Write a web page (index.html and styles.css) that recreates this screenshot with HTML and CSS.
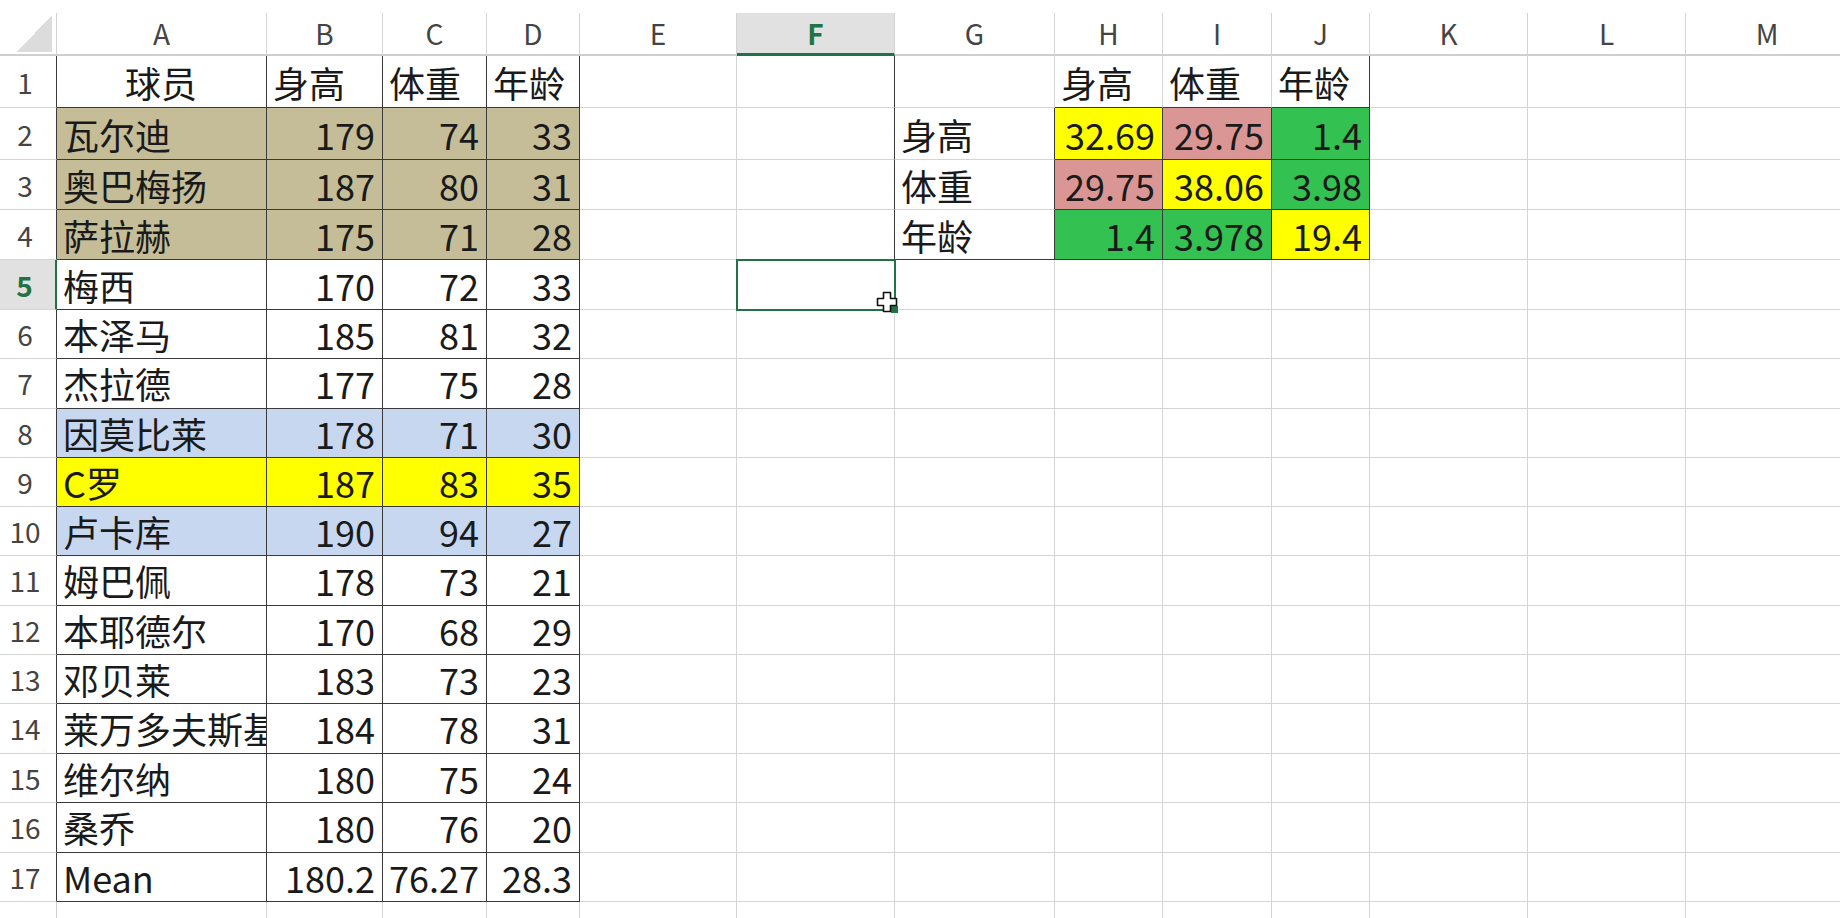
FILE: index.html
```html
<!doctype html>
<html>
  <head>
    <title>球员数据</title>
    <link rel="stylesheet" href="styles.css">
  </head>
  <body>
    <div class="sheet">
      <div class="corner"></div>
      <div class="ch">A</div>
      <div class="ch">B</div>
      <div class="ch">C</div>
      <div class="ch">D</div>
      <div class="ch">E</div>
      <div class="ch sel">F</div>
      <div class="ch">G</div>
      <div class="ch">H</div>
      <div class="ch">I</div>
      <div class="ch">J</div>
      <div class="ch">K</div>
      <div class="ch">L</div>
      <div class="ch">M</div>

      <!-- 1 -->
      <div class="rh e">1</div>
      <div class="c t m">球员</div>
      <div class="c t">身高</div>
      <div class="c t">体重</div>
      <div class="c t">年龄</div>
      <div class="c"></div>
      <div class="c er"></div>
      <div class="c"></div>
      <div class="c eb">身高</div>
      <div class="c eb">体重</div>
      <div class="c eb er">年龄</div>
      <div class="c"></div><div class="c"></div><div class="c"></div>

      <!-- 2 -->
      <div class="rh e">2</div>
      <div class="c t k">瓦尔迪</div>
      <div class="c t k n">179</div>
      <div class="c t k n">74</div>
      <div class="c t k n">33</div>
      <div class="c"></div>
      <div class="c er"></div>
      <div class="c er">身高</div>
      <div class="c t y n">32.69</div>
      <div class="c t p n">29.75</div>
      <div class="c t g n">1.4</div>
      <div class="c"></div><div class="c"></div><div class="c"></div>

      <!-- 3 -->
      <div class="rh e">3</div>
      <div class="c t k">奥巴梅扬</div>
      <div class="c t k n">187</div>
      <div class="c t k n">80</div>
      <div class="c t k n">31</div>
      <div class="c"></div>
      <div class="c er"></div>
      <div class="c er">体重</div>
      <div class="c t p n">29.75</div>
      <div class="c t y n">38.06</div>
      <div class="c t g n">3.98</div>
      <div class="c"></div><div class="c"></div><div class="c"></div>

      <!-- 4 -->
      <div class="rh e">4</div>
      <div class="c t k">萨拉赫</div>
      <div class="c t k n">175</div>
      <div class="c t k n">71</div>
      <div class="c t k n">28</div>
      <div class="c"></div>
      <div class="c er"></div>
      <div class="c er eb">年龄</div>
      <div class="c t g n">1.4</div>
      <div class="c t g n">3.978</div>
      <div class="c t y n">19.4</div>
      <div class="c"></div><div class="c"></div><div class="c"></div>

      <!-- 5 -->
      <div class="rh sel">5</div>
      <div class="c t">梅西</div>
      <div class="c t n">170</div>
      <div class="c t n">72</div>
      <div class="c t n">33</div>
      <div class="c"></div>
      <div class="c cur">
        <svg class="pointer" width="22" height="22" viewBox="0 0 22 22">
          <path d="M7.5 1.5h7v6h6v7h-6v6h-7v-6h-6v-7h6z" fill="#fff" stroke="#111" stroke-width="1.6" stroke-linejoin="round"/>
        </svg>
      </div>
      <div class="c"></div><div class="c"></div><div class="c"></div><div class="c"></div>
      <div class="c"></div><div class="c"></div><div class="c"></div>

      <!-- 6 -->
      <div class="rh e">6</div>
      <div class="c t">本泽马</div>
      <div class="c t n">185</div>
      <div class="c t n">81</div>
      <div class="c t n">32</div>
      <div class="c"></div><div class="c"></div><div class="c"></div><div class="c"></div>
      <div class="c"></div><div class="c"></div><div class="c"></div><div class="c"></div><div class="c"></div>

      <!-- 7 -->
      <div class="rh e">7</div>
      <div class="c t">杰拉德</div>
      <div class="c t n">177</div>
      <div class="c t n">75</div>
      <div class="c t n">28</div>
      <div class="c"></div><div class="c"></div><div class="c"></div><div class="c"></div>
      <div class="c"></div><div class="c"></div><div class="c"></div><div class="c"></div><div class="c"></div>

      <!-- 8 -->
      <div class="rh e">8</div>
      <div class="c t bl">因莫比莱</div>
      <div class="c t bl n">178</div>
      <div class="c t bl n">71</div>
      <div class="c t bl n">30</div>
      <div class="c"></div><div class="c"></div><div class="c"></div><div class="c"></div>
      <div class="c"></div><div class="c"></div><div class="c"></div><div class="c"></div><div class="c"></div>

      <!-- 9 -->
      <div class="rh e">9</div>
      <div class="c t y">C罗</div>
      <div class="c t y n">187</div>
      <div class="c t y n">83</div>
      <div class="c t y n">35</div>
      <div class="c"></div><div class="c"></div><div class="c"></div><div class="c"></div>
      <div class="c"></div><div class="c"></div><div class="c"></div><div class="c"></div><div class="c"></div>

      <!-- 10 -->
      <div class="rh e">10</div>
      <div class="c t bl">卢卡库</div>
      <div class="c t bl n">190</div>
      <div class="c t bl n">94</div>
      <div class="c t bl n">27</div>
      <div class="c"></div><div class="c"></div><div class="c"></div><div class="c"></div>
      <div class="c"></div><div class="c"></div><div class="c"></div><div class="c"></div><div class="c"></div>

      <!-- 11 -->
      <div class="rh e">11</div>
      <div class="c t">姆巴佩</div>
      <div class="c t n">178</div>
      <div class="c t n">73</div>
      <div class="c t n">21</div>
      <div class="c"></div><div class="c"></div><div class="c"></div><div class="c"></div>
      <div class="c"></div><div class="c"></div><div class="c"></div><div class="c"></div><div class="c"></div>

      <!-- 12 -->
      <div class="rh e">12</div>
      <div class="c t">本耶德尔</div>
      <div class="c t n">170</div>
      <div class="c t n">68</div>
      <div class="c t n">29</div>
      <div class="c"></div><div class="c"></div><div class="c"></div><div class="c"></div>
      <div class="c"></div><div class="c"></div><div class="c"></div><div class="c"></div><div class="c"></div>

      <!-- 13 -->
      <div class="rh e">13</div>
      <div class="c t">邓贝莱</div>
      <div class="c t n">183</div>
      <div class="c t n">73</div>
      <div class="c t n">23</div>
      <div class="c"></div><div class="c"></div><div class="c"></div><div class="c"></div>
      <div class="c"></div><div class="c"></div><div class="c"></div><div class="c"></div><div class="c"></div>

      <!-- 14 -->
      <div class="rh e">14</div>
      <div class="c t clip"><span>莱万多夫斯基</span></div>
      <div class="c t n">184</div>
      <div class="c t n">78</div>
      <div class="c t n">31</div>
      <div class="c"></div><div class="c"></div><div class="c"></div><div class="c"></div>
      <div class="c"></div><div class="c"></div><div class="c"></div><div class="c"></div><div class="c"></div>

      <!-- 15 -->
      <div class="rh e">15</div>
      <div class="c t">维尔纳</div>
      <div class="c t n">180</div>
      <div class="c t n">75</div>
      <div class="c t n">24</div>
      <div class="c"></div><div class="c"></div><div class="c"></div><div class="c"></div>
      <div class="c"></div><div class="c"></div><div class="c"></div><div class="c"></div><div class="c"></div>

      <!-- 16 -->
      <div class="rh e">16</div>
      <div class="c t">桑乔</div>
      <div class="c t n">180</div>
      <div class="c t n">76</div>
      <div class="c t n">20</div>
      <div class="c"></div><div class="c"></div><div class="c"></div><div class="c"></div>
      <div class="c"></div><div class="c"></div><div class="c"></div><div class="c"></div><div class="c"></div>

      <!-- 17 -->
      <div class="rh e">17</div>
      <div class="c t">Mean</div>
      <div class="c t n">180.2</div>
      <div class="c t n">76.27</div>
      <div class="c t n">28.3</div>
      <div class="c"></div><div class="c"></div><div class="c"></div><div class="c"></div>
      <div class="c"></div><div class="c"></div><div class="c"></div><div class="c"></div><div class="c"></div>

      <!-- 18 -->
      <div class="rh">18</div>
      <div class="c"></div><div class="c"></div><div class="c"></div><div class="c"></div>
      <div class="c"></div><div class="c"></div><div class="c"></div><div class="c"></div>
      <div class="c"></div><div class="c"></div><div class="c"></div><div class="c"></div><div class="c"></div>
    </div>
  </body>
</html>
```

FILE: styles.css
```css
body {
  margin: 0;
  background: #fff;
  overflow: hidden;
  font-family: "Noto Sans CJK SC", "Noto Sans", sans-serif;
  color: #1a1a1a;
}
* {
  box-sizing: border-box;
}
.sheet {
  display: grid;
  grid-template-columns: 57px 210px 116px 104px 93px 157px 158px 160px 108px 109px 98px 158px 158px 163px;
  grid-template-rows: 56px 52px 52px 50px 50px 50px repeat(8, 49.25px) repeat(5, 49.5px);
  width: 1840px;
  height: 918px;
  overflow: hidden;
}
.corner {
  margin-top: 13px;
  border-right: 1px solid #d4d4d4;
  border-bottom: 2px solid #cfcfcf;
  background: linear-gradient(to bottom right, transparent 50%, #dcdcdc 50%) no-repeat right 4px bottom 2px / 35px 37px;
}
.ch {
  margin-top: 13px;
  border-right: 1px solid #d4d4d4;
  border-bottom: 2px solid #cfcfcf;
  display: flex;
  align-items: center;
  justify-content: center;
  font-size: 28px;
  line-height: 41px;
  color: #444;
}
.ch.sel {
  background: #e1e1e1;
  border-bottom: 3px solid #217346;
  color: #217346;
  font-weight: bold;
}
.rh {
  border-right: 1px solid #cfcfcf;
  border-bottom: 1px solid #d4d4d4;
  display: flex;
  align-items: center;
  justify-content: center;
  padding-right: 6px;
  font-size: 28px;
  line-height: 40px;
  color: #444;
}
.rh.e {
  border-right-color: #3a3a3a;
}
.rh.sel {
  background: #e1e1e1;
  border-right: 2px solid #217346;
  color: #217346;
  font-weight: bold;
}
.c {
  border-right: 1px solid #d4d4d4;
  border-bottom: 1px solid #d4d4d4;
  display: flex;
  align-items: center;
  padding: 0 7px 0 6px;
  font-size: 36px;
  line-height: 42px;
  white-space: nowrap;
  min-width: 0;
}
.clip {
  padding-right: 0;
}
.clip span {
  flex: 1;
  min-width: 0;
  clip-path: inset(-20px 0 -20px -20px);
}
.t {
  border-right-color: #3a3a3a;
  border-bottom-color: #3a3a3a;
}
.er {
  border-right-color: #3a3a3a;
}
.eb {
  border-bottom-color: #3a3a3a;
}
.n {
  justify-content: flex-end;
}
.m {
  justify-content: center;
}
.k {
  background: #c4bd97;
}
.bl {
  background: #c6d7ef;
}
.y {
  background: #ffff00;
}
.p {
  background: #da9694;
}
.g {
  background: #33c152;
}
.cur {
  position: relative;
  z-index: 1;
}
.cur::before {
  content: "";
  position: absolute;
  left: -1px;
  top: -1px;
  right: -2px;
  bottom: -2px;
  border: 2px solid #217346;
}
.cur::after {
  content: "";
  position: absolute;
  right: -5px;
  bottom: -5px;
  width: 7px;
  height: 7px;
  background: #217346;
  border: 1px solid #fff;
}
.pointer {
  position: absolute;
  left: 139px;
  top: 31px;
  z-index: 2;
}
```
